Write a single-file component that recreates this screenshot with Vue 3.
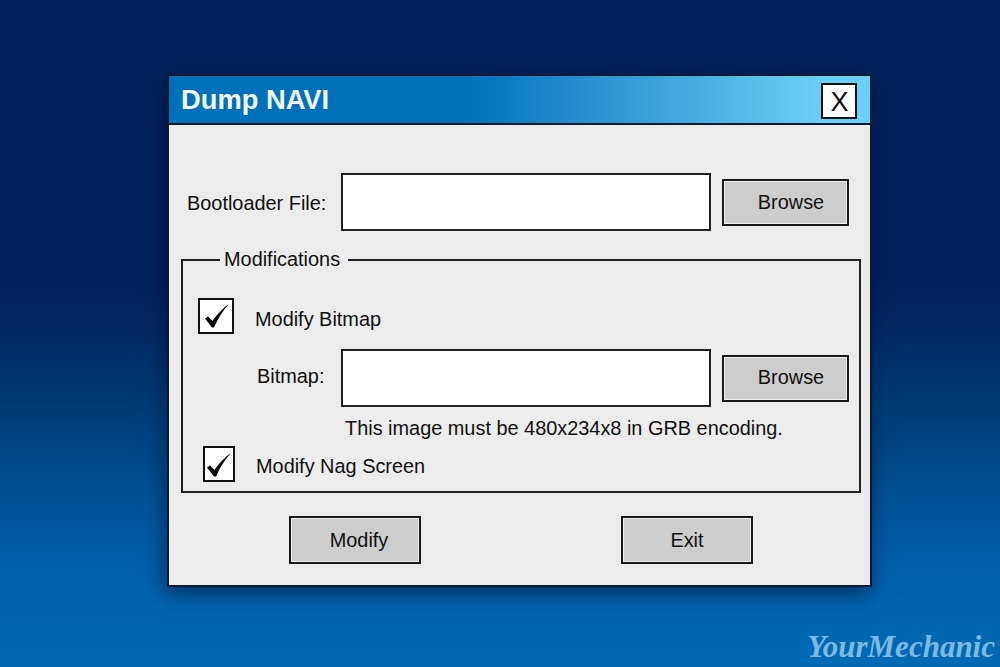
<template>
  <div class="desktop">
    <div class="window">
      <div class="title-bar">
        <h1 class="title">Dump NAVI</h1>
        <button class="close">X</button>
      </div>

      <div class="content">
        <div class="file-row">
          <label class="file-label first">Bootloader File:</label>
          <div class="file-input"></div>
          <button class="btn browse top-browse">Browse</button>
        </div>

        <div class="mods">
          <span class="legend">Modifications</span>

          <div class="check-row one">
            <span class="box big">
              <svg viewBox="2 2 32 32" width="32" height="32"><path :d="tick" fill="#000" /></svg>
            </span>
            <span class="check-label">Modify Bitmap</span>
          </div>

          <div class="file-row inner">
            <label class="file-label second">Bitmap:</label>
            <div class="file-input"></div>
            <button class="btn browse">Browse</button>
          </div>
          <p class="note">This image must be 480x234x8 in GRB encoding.</p>

          <div class="check-row two">
            <span class="box small">
              <svg viewBox="5 1 28 32" width="28" height="32"><path :d="tick" fill="#000" /></svg>
            </span>
            <span class="check-label low">Modify Nag Screen</span>
          </div>
        </div>

        <div class="actions">
          <button class="btn action modify">Modify</button>
          <button class="btn action">Exit</button>
        </div>
      </div>
    </div>

    <div class="logo">YourMechanic</div>
  </div>
</template>

<script setup>
// tapered check mark shared by both boxes
const tick = 'M7 20.5 L10 18.5 L14.5 23 C19 16 25 10 31 6 C25 12.5 20 20 16 29.5 L14 29.5 Z'
</script>

<style>
html, body {
  margin: 0;
  background: #00225c;
}
</style>

<style scoped>
.desktop {
  position: relative;
  width: 1000px;
  height: 667px;
  overflow: hidden;
  padding: 74px 0 0 167px;
  box-sizing: border-box;
  background: linear-gradient(180deg, #00225c 0%, #00225c 42%, #002a63 50%, #003a75 60%, #004b8c 70%, #0059a0 80%, #0064ae 90%, #006bb5 100%);
  font-family: "Liberation Sans", Arial, sans-serif;
  font-size: 19.9px;
  color: #111;
}

.window {
  width: 705px;
  box-sizing: border-box;
  border: 2px solid #0a1a33;
  background: #ececec;
  box-shadow: -2px 8px 20px rgba(0, 10, 40, 0.5);
}

.title-bar {
  height: 47px;
  display: flex;
  align-items: center;
  justify-content: space-between;
  padding: 0 13px 0 12px;
  border-bottom: 2px solid #0a1a33;
  background: linear-gradient(90deg, #0070ba 0%, #0070ba 42%, #6bcff6 93%, #6bcff6 100%);
}

.title {
  margin: 0;
  font-size: 27.3px;
  font-weight: bold;
  color: #f4f8fb;
}

.close {
  width: 36px;
  height: 36px;
  margin-top: 3px;
  padding: 2px 0 0 1px;
  box-sizing: border-box;
  border: 2px solid #111;
  background: #fff;
  font-family: inherit;
  font-size: 27px;
  color: #111;
}

.content {
  padding: 48px 10px 21px 12px;
}

.file-row {
  display: flex;
  align-items: center;
  gap: 11px;
}

.file-label {
  flex: none;
}

.first {
  width: 143px;
  margin-left: 6px;
  padding-top: 3px;
}

.second {
  width: 73px;
  margin-left: 74px;
  padding-bottom: 4px;
}

.file-input {
  width: 370px;
  height: 58px;
  box-sizing: border-box;
  border: 2px solid #222;
  background: #fff;
}

.btn {
  box-sizing: border-box;
  border: 2px solid #1a1a1a;
  background: #cdcdcd;
  box-shadow: inset 0 0 0 1px #eee;
  font-family: inherit;
  font-size: 19.9px;
  color: #111;
}

.browse {
  width: 127px;
  height: 47px;
  padding: 0 0 2px 11px;
}

.top-browse {
  padding-bottom: 0;
}

.mods {
  position: relative;
  width: 680px;
  box-sizing: border-box;
  margin-top: 28px;
  padding-bottom: 9px;
  border: 2px solid #222;
}

.legend {
  position: absolute;
  top: -13px;
  left: 37px;
  padding: 0 8px 0 4px;
  background: #ececec;
}

.check-row {
  display: flex;
  align-items: center;
  gap: 21px;
}

.check-label {
  padding-top: 6px;
}

.low {
  padding-top: 4px;
}

.one {
  margin: 37px 0 15px 15px;
}

.two {
  margin: 8px 0 0 20px;
}

.box {
  box-sizing: border-box;
  border: 2px solid #111;
  background: #fff;
  display: block;
  flex: none;
}

.box svg {
  display: block;
}

.big {
  width: 36px;
  height: 36px;
}

.small {
  width: 32px;
  height: 36px;
}

.note {
  margin: 11px 0 0 162px;
  line-height: 20px;
}

.actions {
  display: flex;
  gap: 200px;
  margin: 23px 0 0 108px;
}

.action {
  width: 132px;
  height: 48px;
}

.modify {
  padding-left: 14px;
}

.logo {
  position: absolute;
  right: 5px;
  bottom: 2px;
  font-family: "Liberation Serif", serif;
  font-style: italic;
  font-weight: bold;
  font-size: 31px;
  color: #7db9e2;
}
</style>
